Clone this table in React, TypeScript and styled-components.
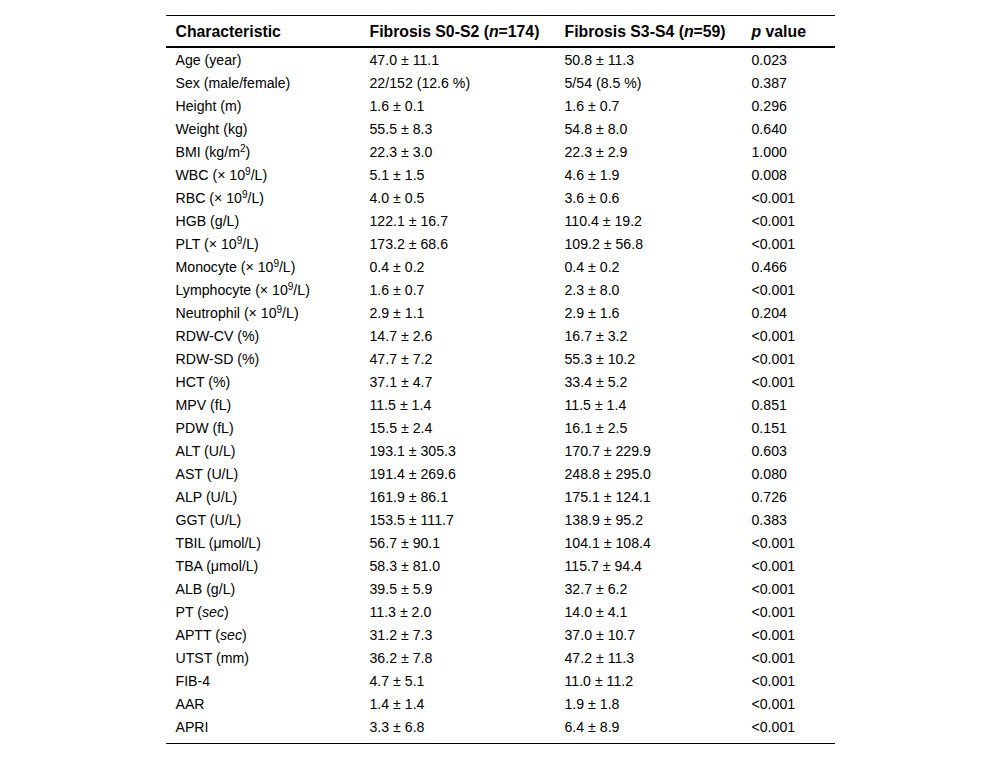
import React from "react";
import styled, { createGlobalStyle } from "styled-components";

const Global = createGlobalStyle`
  html, body { margin: 0; padding: 0; background: #fff; }
  body { font-family: "Liberation Sans", Arial, sans-serif; color: #000; }
`;

const Table = styled.div`
  width: 669px;
  margin: 15px auto 0;
  border-top: 1px solid #000;
  border-bottom: 1px solid #000;
  padding-bottom: 5px;
  font-size: 14px;
`;

const Row = styled.div<{ $head?: boolean }>`
  display: grid;
  grid-template-columns: 194px 195px 187px 93px;
  height: ${(p) => (p.$head ? "29px" : "23px")};
  padding-top: ${(p) => (p.$head ? "1px" : "0")};
  align-items: center;
  font-weight: ${(p) => (p.$head ? 700 : 400)};
  font-size: ${(p) => (p.$head ? "15.8px" : "14.15px")};
  border-bottom: ${(p) => (p.$head ? "2px solid #000" : "none")};
`;

const Cell = styled.div`
  padding-left: 10px;
  white-space: nowrap;
  line-height: 16px;
`;

const Sup = styled.sup`
  font-size: 10px;
  line-height: 0;
  vertical-align: 5px;
`;

const I = styled.i`
  font-style: italic;
`;

type R = [React.ReactNode, string, string, string];

const t9 = (name: string) => (
  <>
    {name} (× 10<Sup>9</Sup>/L)
  </>
);

const rows: R[] = [
  ["Age (year)", "47.0 ± 11.1", "50.8 ± 11.3", "0.023"],
  ["Sex (male/female)", "22/152 (12.6 %)", "5/54 (8.5 %)", "0.387"],
  ["Height (m)", "1.6 ± 0.1", "1.6 ± 0.7", "0.296"],
  ["Weight (kg)", "55.5 ± 8.3", "54.8 ± 8.0", "0.640"],
  [<>BMI (kg/m<Sup>2</Sup>)</>, "22.3 ± 3.0", "22.3 ± 2.9", "1.000"],
  [t9("WBC"), "5.1 ± 1.5", "4.6 ± 1.9", "0.008"],
  [t9("RBC"), "4.0 ± 0.5", "3.6 ± 0.6", "<0.001"],
  ["HGB (g/L)", "122.1 ± 16.7", "110.4 ± 19.2", "<0.001"],
  [t9("PLT"), "173.2 ± 68.6", "109.2 ± 56.8", "<0.001"],
  [t9("Monocyte"), "0.4 ± 0.2", "0.4 ± 0.2", "0.466"],
  [t9("Lymphocyte"), "1.6 ± 0.7", "2.3 ± 8.0", "<0.001"],
  [t9("Neutrophil"), "2.9 ± 1.1", "2.9 ± 1.6", "0.204"],
  ["RDW-CV (%)", "14.7 ± 2.6", "16.7 ± 3.2", "<0.001"],
  ["RDW-SD (%)", "47.7 ± 7.2", "55.3 ± 10.2", "<0.001"],
  ["HCT (%)", "37.1 ± 4.7", "33.4 ± 5.2", "<0.001"],
  ["MPV (fL)", "11.5 ± 1.4", "11.5 ± 1.4", "0.851"],
  ["PDW (fL)", "15.5 ± 2.4", "16.1 ± 2.5", "0.151"],
  ["ALT (U/L)", "193.1 ± 305.3", "170.7 ± 229.9", "0.603"],
  ["AST (U/L)", "191.4 ± 269.6", "248.8 ± 295.0", "0.080"],
  ["ALP (U/L)", "161.9 ± 86.1", "175.1 ± 124.1", "0.726"],
  ["GGT (U/L)", "153.5 ± 111.7", "138.9 ± 95.2", "0.383"],
  ["TBIL (μmol/L)", "56.7 ± 90.1", "104.1 ± 108.4", "<0.001"],
  ["TBA (μmol/L)", "58.3 ± 81.0", "115.7 ± 94.4", "<0.001"],
  ["ALB (g/L)", "39.5 ± 5.9", "32.7 ± 6.2", "<0.001"],
  [<>PT (<I>sec</I>)</>, "11.3 ± 2.0", "14.0 ± 4.1", "<0.001"],
  [<>APTT (<I>sec</I>)</>, "31.2 ± 7.3", "37.0 ± 10.7", "<0.001"],
  ["UTST (mm)", "36.2 ± 7.8", "47.2 ± 11.3", "<0.001"],
  ["FIB-4", "4.7 ± 5.1", "11.0 ± 11.2", "<0.001"],
  ["AAR", "1.4 ± 1.4", "1.9 ± 1.8", "<0.001"],
  ["APRI", "3.3 ± 6.8", "6.4 ± 8.9", "<0.001"],
];

export default function App() {
  return (
    <>
      <Global />
      <Table>
        <Row $head>
          <Cell>Characteristic</Cell>
          <Cell>
            Fibrosis S0-S2 (<I>n</I>=174)
          </Cell>
          <Cell>
            Fibrosis S3-S4 (<I>n</I>=59)
          </Cell>
          <Cell>
            <I>p</I> value
          </Cell>
        </Row>
        {rows.map((r, i) => (
          <Row key={i}>
            <Cell>{r[0]}</Cell>
            <Cell>{r[1]}</Cell>
            <Cell>{r[2]}</Cell>
            <Cell>{r[3]}</Cell>
          </Row>
        ))}
      </Table>
    </>
  );
}
